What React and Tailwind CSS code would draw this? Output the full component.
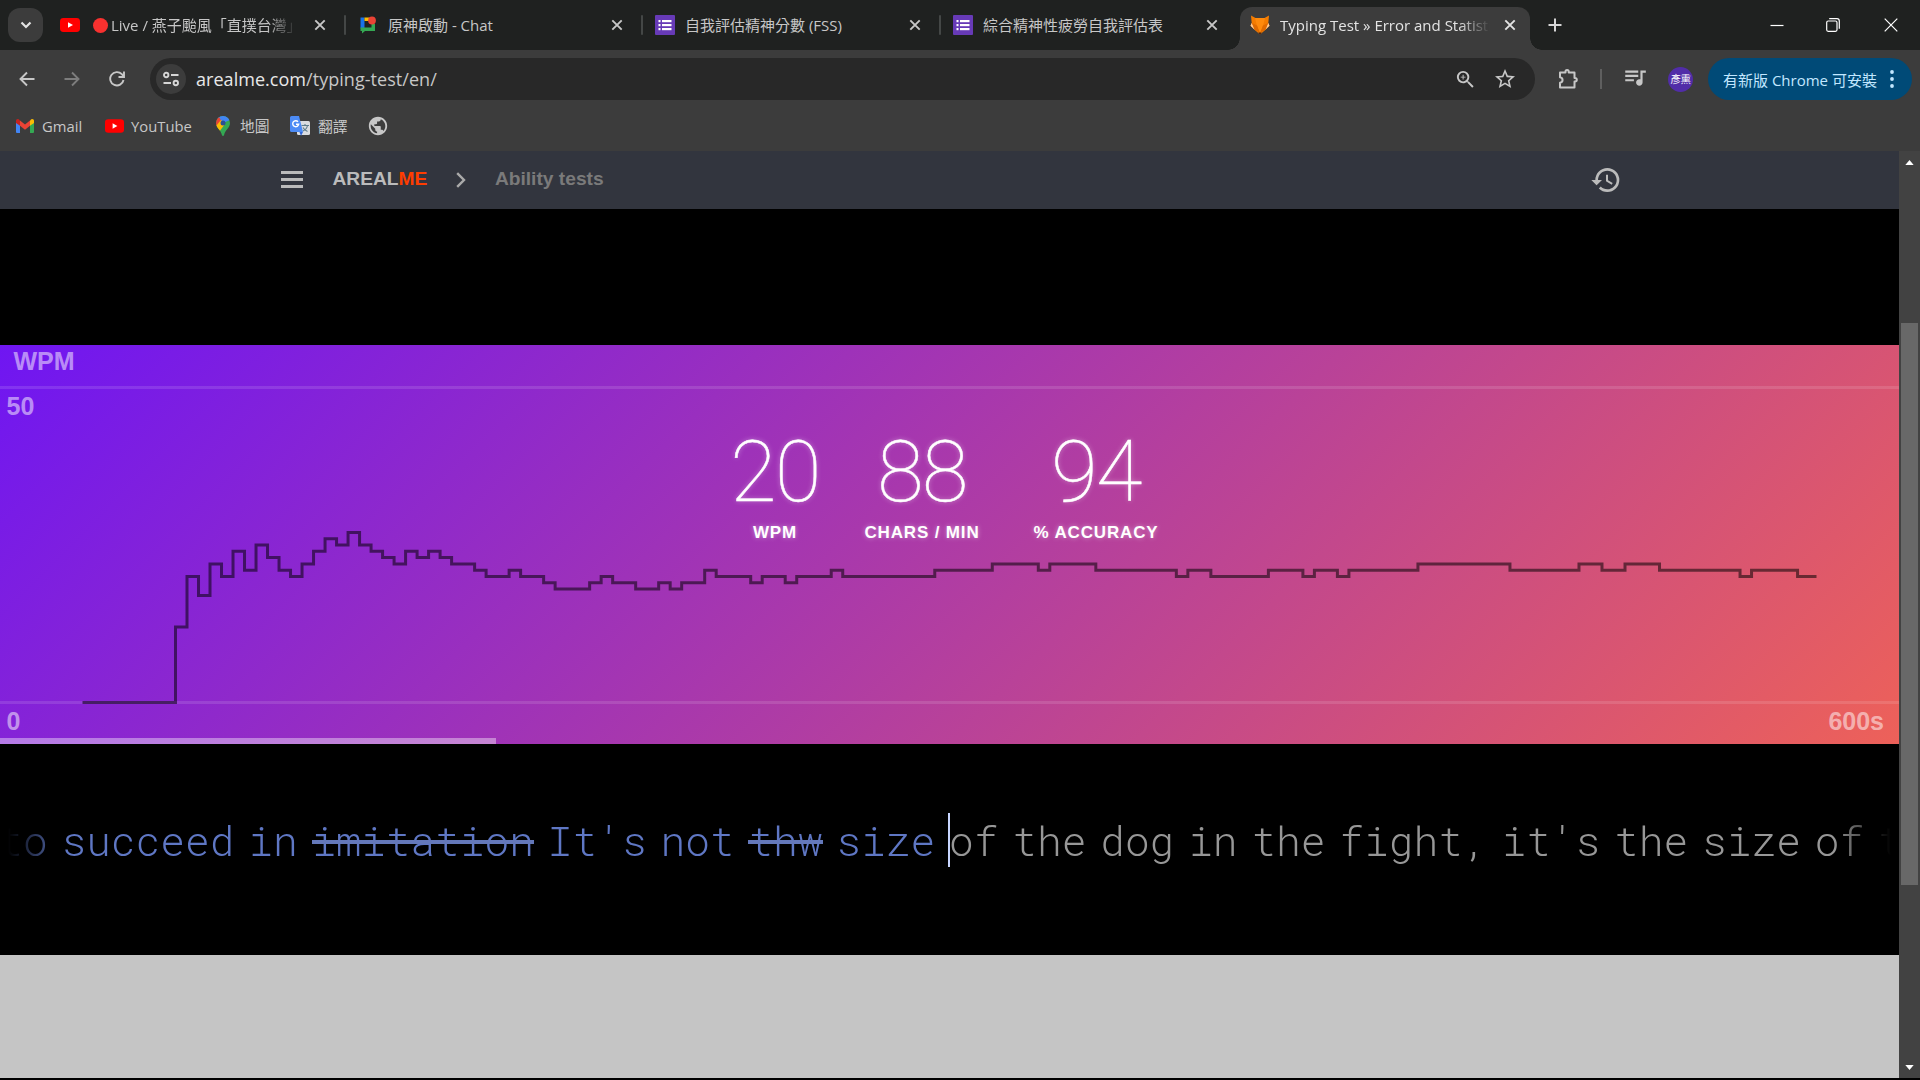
import React from "react";
import { MdHistory, MdStarBorder, MdZoomIn, MdQueueMusic, MdPublic } from "react-icons/md";

function YouTube({ className }) {
  return (
    <svg viewBox="0 0 20 14" className={className}>
      <rect width="20" height="14" rx="3.4" fill="#f00" />
      <path d="M8 4.2v5.6l5-2.8z" fill="#fff" />
    </svg>
  );
}

function ChatIcon() {
  return (
    <svg viewBox="0 0 18 18" className="h-[18px] w-[18px]">
      <path d="M1.500 1.500h4v11h-4z" fill="#1a73e8" />
      <path d="M5.500 1.500h5v3.500h-5z" fill="#fbbc04" />
      <path d="M1.500 11.500h11V8H16v7H6l-3 2.500V15H1.500z" fill="#34a853" />
      <circle cx="13" cy="4.500" r="3.900" fill="#ea4335" />
    </svg>
  );
}

function FormsIcon() {
  return (
    <svg viewBox="0 0 20 20" className="h-5 w-5">
      <rect width="20" height="20" rx="1" fill="#673ab7" />
      <g fill="#fff">
        <rect x="3.500" y="5" width="2" height="2.200" />
        <rect x="3.500" y="9" width="2" height="2.200" />
        <rect x="3.500" y="13" width="2" height="2.200" />
        <rect x="7" y="5" width="9.500" height="2.200" />
        <rect x="7" y="9" width="9.500" height="2.200" />
        <rect x="7" y="13" width="9.500" height="2.200" />
      </g>
    </svg>
  );
}

function FoxIcon() {
  return (
    <svg viewBox="0 0 20 20" className="h-5 w-5">
      <path d="M1 .5 5.500 3h9L19 .5 18.300 8l1.200 2.800-4 4L10 19.500l-5.500-4.700-4-4L1.700 8z" fill="#f57c00" />
      <path d="m.5 10.800 1.200-2.800 3 6.700zM19.500 10.800 18.300 8l-3 6.700z" fill="#ffcc9a" />
      <path d="M5 3h10l-1.500 6L10 19 6.500 9z" fill="#ff8a0c" />
      <path d="M4.500 14.500 2 8l5 2.500L10 18zM15.500 14.500 18 8l-5 2.500L10 18z" fill="#e06a00" />
      <path d="M8.300 17.500h3.400L10 19.700z" fill="#3b1d12" />
    </svg>
  );
}

function Cross({ className }) {
  return (
    <svg viewBox="0 0 12 12" className={"h-3 w-3 shrink-0 " + className} stroke="currentColor" strokeWidth="1.900">
      <path d="M1.300 1.300l9.400 9.400M10.700 1.300l-9.400 9.400" />
    </svg>
  );
}

function Tab({ icon, title, fade, active, live, className }) {
  return (
    <div className={"flex h-full shrink-0 items-center " + className}>
      <span className="flex w-5 shrink-0 items-center justify-center">{icon}</span>
      <span
        className={
          "flex min-w-0 flex-1 items-center overflow-hidden text-[15px] leading-5 whitespace-nowrap " +
          (live ? "ml-[13px] " : "ml-2.5 ") +
          (active ? "text-[#e3e3e3] " : "text-[#c7c7c7] ") +
          (fade ? "[mask-image:linear-gradient(to_right,#000_85%,transparent)]" : "")
        }
      >
        {live && <span className="mr-[3px] h-[15px] w-[15px] shrink-0 rounded-full bg-[#f8312f]" />}
        {title}
      </span>
      <Cross className={active ? "ml-3.5 text-[#e3e3e3]" : "ml-[17px] text-[#c7c7c7]"} />
    </div>
  );
}

function Separator() {
  return <span className="mr-3 ml-[18px] h-5 w-0.5 shrink-0 rounded bg-[#444746]" />;
}

function TabStrip() {
  return (
    <div className="flex h-[50px] items-center bg-[#1f2120]">
      <button className="ml-2 flex h-[34px] w-[35px] shrink-0 items-center justify-center rounded-xl bg-[#3c3c3c]">
        <svg viewBox="0 0 12 8" className="h-2 w-3" fill="none" stroke="#e3e3e3" strokeWidth="2.200">
          <path d="m1.500 1.500 4.500 4.500 4.500-4.500" />
        </svg>
      </button>
      <Tab className="ml-[17px] w-[266px]" icon={<YouTube className="h-3.5 w-5" />} title="Live / 燕子颱風「直撲台灣」" fade live />
      <Separator />
      <Tab className="w-[265px]" icon={<ChatIcon />} title="原神啟動 - Chat" />
      <Separator />
      <Tab className="w-[266px]" icon={<FormsIcon />} title="自我評估精神分數 (FSS)" />
      <Separator />
      <Tab className="w-[265px]" icon={<FormsIcon />} title="綜合精神性疲勞自我評估表" />
      <div className="ml-2.5 flex h-full shrink-0 items-end">
        <div className="h-3 w-3 bg-[radial-gradient(circle_at_0_0,#1f2120_11.5px,#3c3c3c_12px)]" />
        <div className="flex h-[43px] w-[290px] items-center rounded-t-xl bg-[#3c3c3c] pb-[7px] pl-2.5">
          <Tab className="w-[266px]" icon={<FoxIcon />} title="Typing Test » Error and Statistics" fade active />
        </div>
        <div className="h-3 w-3 bg-[radial-gradient(circle_at_100%_0,#1f2120_11.5px,#3c3c3c_12px)]" />
      </div>
      <svg viewBox="0 0 14 14" className="ml-[6px] h-[14px] w-[14px]" stroke="#d6d6d6" strokeWidth="2">
        <path d="M7 .5v13M.5 7h13" />
      </svg>
      <div className="ml-auto flex items-center text-white">
        <svg viewBox="0 0 14 14" className="h-[14px] w-[14px]" stroke="currentColor" strokeWidth="1.200">
          <path d="M.5 7.500h13" />
        </svg>
        <svg viewBox="0 0 14 14" className="ml-[42px] h-[14px] w-[14px]" fill="none" stroke="currentColor" strokeWidth="1.200">
          <rect x=".7" y="3" width="10.300" height="10.300" rx="1.500" />
          <path d="M3.200.7H11A2.300 2.300 0 0 1 13.300 3v7.800" />
        </svg>
        <svg viewBox="0 0 14 14" className="mr-[22px] ml-[44px] h-[14px] w-[14px]" stroke="currentColor" strokeWidth="1.200">
          <path d="M.7.7l12.600 12.600M13.300.7.7 13.300" />
        </svg>
      </div>
    </div>
  );
}

function Toolbar() {
  return (
    <div className="flex h-[58px] items-center text-[#c7c7c7]">
      <svg viewBox="0 0 16 16" className="ml-[19px] h-4 w-4" fill="none" stroke="currentColor" strokeWidth="1.900">
        <path d="M15.500 8H2M8 1.500 1.500 8 8 14.500" />
      </svg>
      <svg viewBox="0 0 16 16" className="ml-[29px] h-4 w-4 text-[#7d7d7d]" fill="none" stroke="currentColor" strokeWidth="1.900">
        <path d="M.5 8H14M8 1.500 14.500 8 8 14.500" />
      </svg>
      <svg viewBox="0 0 16 16" className="ml-[29px] h-4 w-4" fill="none" stroke="currentColor" strokeWidth="1.900">
        <path d="M14.500 9A6.700 6.700 0 1 1 12.800 3.200L14.800 5.500M15 .5v5.500H9.500" />
      </svg>
      <div className="ml-[25px] flex h-[42px] w-[1385px] items-center rounded-full bg-[#282828]">
        <span className="ml-[6px] flex h-[30px] w-[30px] items-center justify-center rounded-full bg-[#3c3c3c]">
          <svg viewBox="0 0 16 16" className="h-4 w-4" fill="none" stroke="#d6d6d6" strokeWidth="1.900">
            <circle cx="3.200" cy="4" r="2.200" />
            <path d="M8 4h7.500M.5 12H8" />
            <circle cx="12.800" cy="12" r="2.200" />
          </svg>
        </span>
        <span className="ml-[10px] text-[18px] tracking-[0.04px] whitespace-nowrap text-[#c7c7c7]">
          <span className="text-[#e8e8e8]">arealme.com</span>/typing-test/en/
        </span>
        <MdZoomIn className="ml-auto h-[23px] w-[23px]" />
        <MdStarBorder className="mr-[18px] ml-4 h-6 w-6" />
      </div>
      <svg viewBox="0 0 24 24" className="ml-[21px] h-6 w-6" fill="none" stroke="currentColor" strokeWidth="2">
        <path d="M4 5.500h5.500V4.500a1.600 1.600 0 0 1 3.200 0v1H18.500v5.500h.6a1.700 1.700 0 0 1 0 3.400h-.6V20.500H4v-4.700c3.400-.6 3.400-5 0-5.600z" strokeLinejoin="round" />
      </svg>
      <span className="ml-5 h-5 w-0.5 bg-[#5f5f5f]" />
      <MdQueueMusic className="-mt-1 ml-[20px] h-[26px] w-[26px]" />
      <span className="ml-5 flex h-[25px] w-[25px] items-center justify-center rounded-full bg-[#512da8] text-[10.5px] leading-none tracking-[-0.5px] whitespace-nowrap text-white">
        彥熏
      </span>
      <div className="ml-[15px] flex h-[42px] w-[204px] items-center rounded-full bg-[#004a77] pl-[15px] text-[#c2e7ff]">
        <span className="w-[154px] pt-0.5 text-[15px] whitespace-nowrap">有新版 Chrome 可安裝</span>
        <svg viewBox="0 0 4 18" className="ml-[13px] h-[18px] w-1" fill="currentColor">
          <circle cx="2" cy="2" r="1.900" />
          <circle cx="2" cy="9" r="1.900" />
          <circle cx="2" cy="16" r="1.900" />
        </svg>
      </div>
    </div>
  );
}

function Bookmarks() {
  const item = "flex items-center text-[14.8px] leading-5 whitespace-nowrap";
  return (
    <div className="flex h-[43px] items-center pb-[7px] pl-4 text-[#c7c7c7]">
      <div className={item + " w-[89px]"}>
        <svg viewBox="0 0 18 14" className="mr-2 h-3.5 w-[18px]">
          <path d="M0 2v11a1 1 0 0 0 1 1h3V5z" fill="#4285f4" />
          <path d="M18 2v11a1 1 0 0 1-1 1h-3V5z" fill="#34a853" />
          <path d="M4 1.500 9 5.500l5-4v5.300L9 10.800 4 6.800z" fill="#ea4335" />
          <path d="M4 1.500V6.800L0 4V2C0 .2 2-.6 3.500.9z" fill="#c5221f" />
          <path d="M14 1.500V6.800L18 4V2c0-1.800-2-2.600-3.500-1.100z" fill="#fbbc04" />
        </svg>
        Gmail
      </div>
      <div className={item + " w-[110px]"}>
        <YouTube className="mr-[7px] h-3.5 w-[19px]" />
        YouTube
      </div>
      <div className={item + " w-[75px]"}>
        <svg viewBox="0 0 14 20" className="mr-[10px] ml-px h-5 w-3.5">
          <defs>
            <clipPath id="pin">
              <path d="M7 0a7 7 0 0 1 7 7c0 5-5 7-6 12.200-.3 1-1.700 1-2 0C5 14 0 12 0 7a7 7 0 0 1 7-7z" />
            </clipPath>
          </defs>
          <g clipPath="url(#pin)">
            <path d="M0 0h14v20H0z" fill="#34a853" />
            <path d="M0 0h14v4L7 7 2 3z" fill="#4285f4" />
            <path d="M-1 1.500 3 1l3 5-6 5z" fill="#ea4335" />
            <path d="M0 10 5 4l4 4-6 8z" fill="#fbbc04" />
          </g>
          <circle cx="7" cy="7" r="2.500" fill="#2d4f93" />
        </svg>
        地圖
      </div>
      <div className={item + " w-[79px]"}>
        <svg viewBox="0 0 20 20" className="mr-2 h-5 w-5">
          <rect x="7" y="5" width="13" height="14" rx="1.500" fill="#dadce0" />
          <path d="M11.500 9.500h7.500M15 8v1.500M17.500 9.500c-.5 3-2.500 4.500-4.500 5.500M13 11.500c1 2 2.500 3.200 4.500 4" stroke="#5f7d8c" strokeWidth="1.100" fill="none" />
          <path d="M1.500 0H9l4 16H1.500A1.500 1.500 0 0 1 0 14.500v-13A1.500 1.500 0 0 1 1.500 0z" fill="#4c8bf5" />
          <path d="M13 16H9.500l1.500 4z" fill="#3367d6" />
          <path d="M8 5.700A3 3 0 1 0 8.700 8.200H6" stroke="#fff" strokeWidth="1.400" fill="none" />
        </svg>
        翻譯
      </div>
      <MdPublic className="-ml-0.5 h-[22px] w-[22px]" />
    </div>
  );
}

function SiteHeader() {
  return (
    <div className="flex h-[58px] items-center bg-[#32353e] pb-px pl-[281px] font-['Liberation_Sans',Arial,sans-serif] text-[19.2px] font-bold text-[#bbb]">
      <div className="flex w-[22px] flex-col gap-1">
        <span className="h-[3px] bg-[#bbb]" />
        <span className="h-[3px] bg-[#bbb]" />
        <span className="h-[3px] bg-[#bbb]" />
      </div>
      <span className="ml-[29.5px]">
        AREAL<span className="text-[#ff3d00]">ME</span>
      </span>
      <svg viewBox="0 0 10 16" className="ml-[29px] h-4 w-2.5" fill="none" stroke="#aaa" strokeWidth="2.400">
        <path d="m1.200 1.200 6.800 6.800-6.800 6.800" />
      </svg>
      <span className="ml-[28.5px] text-[#7a7a7a]">Ability tests</span>
      <MdHistory className="mr-[277px] ml-auto h-8 w-8" />
    </div>
  );
}

/* [slot, wpm] pairs: the value changes at each slot and holds until the next. */
const wpm = [
  [0, 12], [1, 20], [2, 17], [3, 22], [4, 20], [5, 24], [6, 21], [7, 25], [8, 23], [9, 21], [10, 20],
  [11, 22], [12, 24], [13, 26], [14, 25], [15, 27], [16, 25], [17, 24], [18, 23], [19, 22], [20, 24],
  [21, 23], [22, 24], [23, 23], [24, 22], [26, 21], [27, 20], [29, 21], [30, 20], [32, 19], [33, 18],
  [36, 19], [37, 20], [38, 19], [40, 18], [42, 19], [43, 18], [44, 19], [46, 21], [47, 20], [50, 19],
  [51, 20], [53, 19], [54, 20], [57, 21], [58, 20], [66, 21], [71, 22], [75, 21], [76, 22], [80, 21],
  [87, 20], [88, 21], [90, 20], [95, 21], [98, 20], [99, 21], [101, 20], [102, 21], [108, 22], [116, 21],
  [122, 22], [124, 21], [126, 22], [129, 21], [136, 20], [137, 21], [141, 20],
];

const linePath =
  "M82.5 357.5" + wpm.map(([slot, v]) => `H${175.5 + slot * 11.504}V${357.5 - v * 6.3}`).join("") + "H1816.5";

function Stat({ value, label, className }) {
  return (
    <div className={"flex flex-col items-center text-white " + className}>
      <span className="h-[84px] font-['Roboto',sans-serif] text-[84.5px] leading-[84px] font-thin tracking-[-1.6px] [-webkit-text-stroke:0.5px_white] [text-shadow:0_0_5px_rgba(255,255,255,0.45)]">
        {value}
      </span>
      <span className="mt-2 font-['Liberation_Sans',Arial,sans-serif] text-[17px] leading-5 font-bold tracking-[0.85px] whitespace-nowrap [text-shadow:0_0_5px_rgba(255,255,255,0.45)]">
        {label}
      </span>
    </div>
  );
}

function Chart() {
  return (
    <div className="relative h-[399px] bg-[linear-gradient(135deg,#6f16f2_0%,#ed6159_100%)]">
      <svg viewBox="0 0 1899 399" className="absolute inset-0 h-full w-full">
        <path d="M0 42.500H1899M0 357.500H1899" stroke="#fff" strokeOpacity=".12" strokeWidth="3" />
        <path d={linePath} fill="none" stroke="#000" strokeOpacity=".53" strokeWidth="3" />
        <g fill="#fff" fillOpacity=".52" fontFamily="Liberation Sans, Arial, sans-serif" fontSize="25" fontWeight="bold">
          <text x="13.500" y="24.500">WPM</text>
          <text x="6.500" y="70">50</text>
          <text x="6.500" y="385">0</text>
          <text x="1884" y="385" textAnchor="end">600s</text>
        </g>
      </svg>
      <div className="absolute bottom-0 left-0 h-1.5 w-[496px] bg-white/40" />
      <div className="relative flex pt-[86px] pl-[715px]">
        <Stat value="20" label="WPM" className="w-[120px]" />
        <Stat value="88" label="CHARS / MIN" className="w-[174px]" />
        <Stat value="94" label="% ACCURACY" className="w-[174px]" />
      </div>
    </div>
  );
}

const typed = [["to"], ["succeed"], ["in"], ["imitation", true], ["It's"], ["not"], ["thw", true], ["size"]];
const pending = ["of", "the", "dog", "in", "the", "fight,", "it's", "the", "size", "of", "the"];

function TypingLine() {
  return (
    <div className="h-[211px] overflow-hidden bg-black pt-[69px]">
      <div className="flex h-[56px] items-center overflow-hidden font-['Roboto_Mono','Liberation_Mono',monospace] text-[41.2px] leading-[54px] font-light [mask-image:linear-gradient(to_right,transparent_8px,#000_65px,#000_1834px,transparent_1891px)]">
        <div className="flex h-full w-[949px] shrink-0 justify-end text-[#5f77c4]">
          {typed.map(([word, wrong], i) => (
            <span key={i} className="relative mr-[13.8px] whitespace-pre">
              {word}
              {wrong && <span className="absolute inset-x-0 top-[27px] h-1 bg-[#6478ba]" />}
            </span>
          ))}
        </div>
        <div className="relative flex h-full min-w-0 flex-1 text-[#979797]">
          <span className="absolute top-0 -left-px h-[54px] w-0.5 bg-[#c8d6ff]" />
          {pending.map((word, i) => (
            <span key={i} className="mr-[13.8px] shrink-0 whitespace-pre">
              {word}
            </span>
          ))}
        </div>
      </div>
    </div>
  );
}

function Scrollbar() {
  return (
    <div className="flex w-[21px] flex-col items-center bg-[#424242]">
      <svg viewBox="0 0 10 6" className="mt-[9px] h-[5px] w-[9px]" fill="#fff">
        <path d="M0 6 5 0l5 6z" />
      </svg>
      <div className="mt-[158px] h-[562px] w-[17px] bg-[#686868]" />
      <svg viewBox="0 0 10 6" className="mt-auto mb-2 h-[5px] w-[9px]" fill="#fff">
        <path d="M0 0h10L5 6z" />
      </svg>
    </div>
  );
}

export default function App() {
  return (
    <div className="flex h-[1080px] w-[1920px] flex-col overflow-hidden bg-[#3c3c3c] font-['Open_Sans','Noto_Sans_CJK_TC',sans-serif]">
      <TabStrip />
      <Toolbar />
      <Bookmarks />
      <div className="flex h-[927px]">
        <div className="w-[1899px]">
          <SiteHeader />
          <div className="h-[136px] bg-black" />
          <Chart />
          <TypingLine />
          <div className="h-[123px] bg-[#c5c5c5]" />
        </div>
        <Scrollbar />
      </div>
      <div className="h-0.5 bg-black" />
    </div>
  );
}
